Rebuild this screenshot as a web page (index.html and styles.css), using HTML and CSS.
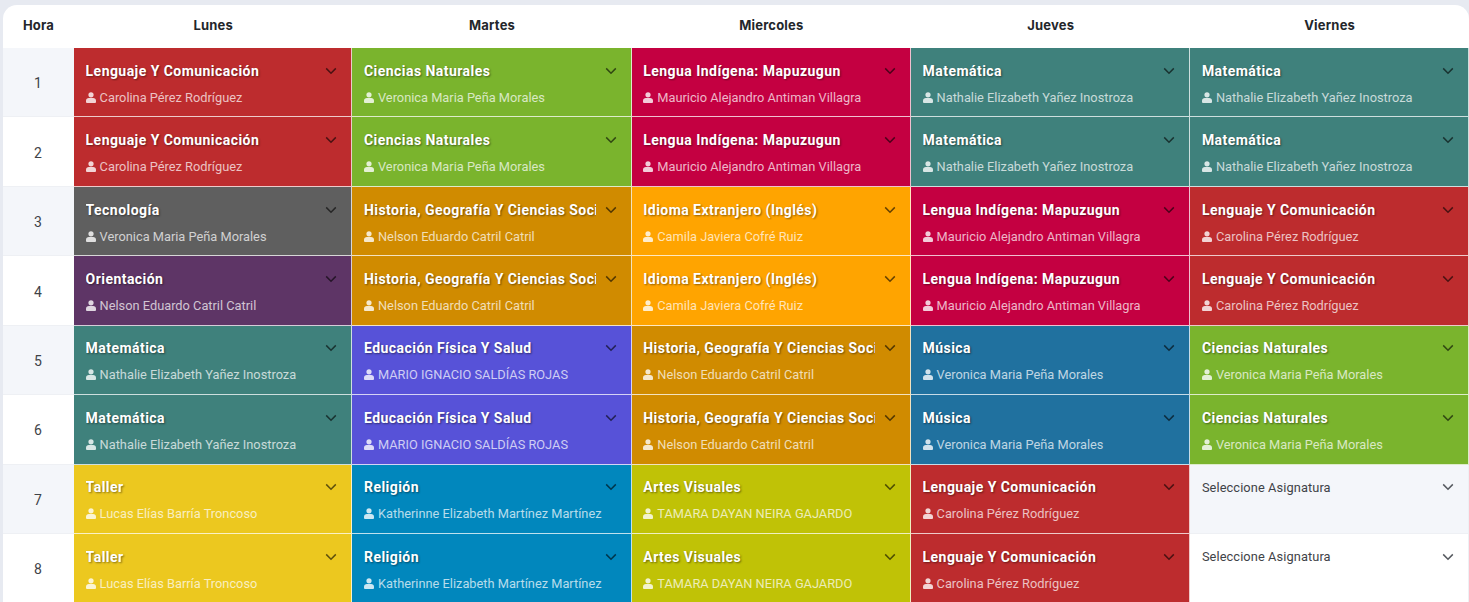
FILE: index.html
```html
<!DOCTYPE html>
<html lang="es">
<head>
<meta charset="utf-8">
<title>Horario</title>
<link rel="stylesheet" href="styles.css">
</head>
<body>
<svg class="defs" width="0" height="0" aria-hidden="true">
<symbol id="chev" viewBox="0 0 12 8"><path d="M1.2 1.4 6 6.2l4.8-4.8" fill="none" stroke="currentColor" stroke-width="1.5"/></symbol>
<symbol id="user" viewBox="0 0 10 11"><circle cx="5" cy="2.8" r="2.6" fill="currentColor"/><path d="M0 10v-1.400C0 6.900 1.300 6 2.800 6h4.400C8.700 6 10 6.900 10 8.600V10a1 1 0 0 1-1 1H1a1 1 0 0 1-1-1z" fill="currentColor"/></symbol>
</svg>
<main class="card">
<div class="grid">
<div class="head">Hora</div><div class="head">Lunes</div><div class="head">Martes</div><div class="head">Miercoles</div><div class="head">Jueves</div><div class="head">Viernes</div>

<div class="hour odd">1</div>
<div class="cell red"><div class="top"><span class="title">Lenguaje Y Comunicación</span><svg class="chev"><use href="#chev"/></svg></div><div class="name"><svg class="user"><use href="#user"/></svg>Carolina Pérez Rodríguez</div></div>
<div class="cell green"><div class="top"><span class="title">Ciencias Naturales</span><svg class="chev"><use href="#chev"/></svg></div><div class="name"><svg class="user"><use href="#user"/></svg>Veronica Maria Peña Morales</div></div>
<div class="cell crimson"><div class="top"><span class="title">Lengua Indígena: Mapuzugun</span><svg class="chev"><use href="#chev"/></svg></div><div class="name"><svg class="user"><use href="#user"/></svg>Mauricio Alejandro Antiman Villagra</div></div>
<div class="cell teal"><div class="top"><span class="title">Matemática</span><svg class="chev"><use href="#chev"/></svg></div><div class="name"><svg class="user"><use href="#user"/></svg>Nathalie Elizabeth Yañez Inostroza</div></div>
<div class="cell teal"><div class="top"><span class="title">Matemática</span><svg class="chev"><use href="#chev"/></svg></div><div class="name"><svg class="user"><use href="#user"/></svg>Nathalie Elizabeth Yañez Inostroza</div></div>

<div class="hour">2</div>
<div class="cell red"><div class="top"><span class="title">Lenguaje Y Comunicación</span><svg class="chev"><use href="#chev"/></svg></div><div class="name"><svg class="user"><use href="#user"/></svg>Carolina Pérez Rodríguez</div></div>
<div class="cell green"><div class="top"><span class="title">Ciencias Naturales</span><svg class="chev"><use href="#chev"/></svg></div><div class="name"><svg class="user"><use href="#user"/></svg>Veronica Maria Peña Morales</div></div>
<div class="cell crimson"><div class="top"><span class="title">Lengua Indígena: Mapuzugun</span><svg class="chev"><use href="#chev"/></svg></div><div class="name"><svg class="user"><use href="#user"/></svg>Mauricio Alejandro Antiman Villagra</div></div>
<div class="cell teal"><div class="top"><span class="title">Matemática</span><svg class="chev"><use href="#chev"/></svg></div><div class="name"><svg class="user"><use href="#user"/></svg>Nathalie Elizabeth Yañez Inostroza</div></div>
<div class="cell teal"><div class="top"><span class="title">Matemática</span><svg class="chev"><use href="#chev"/></svg></div><div class="name"><svg class="user"><use href="#user"/></svg>Nathalie Elizabeth Yañez Inostroza</div></div>

<div class="hour odd">3</div>
<div class="cell grey"><div class="top"><span class="title">Tecnología</span><svg class="chev"><use href="#chev"/></svg></div><div class="name"><svg class="user"><use href="#user"/></svg>Veronica Maria Peña Morales</div></div>
<div class="cell ochre"><div class="top"><span class="title">Historia, Geografía Y Ciencias Sociales</span><svg class="chev"><use href="#chev"/></svg></div><div class="name"><svg class="user"><use href="#user"/></svg>Nelson Eduardo Catril Catril</div></div>
<div class="cell amber"><div class="top"><span class="title">Idioma Extranjero (Inglés)</span><svg class="chev"><use href="#chev"/></svg></div><div class="name"><svg class="user"><use href="#user"/></svg>Camila Javiera Cofré Ruiz</div></div>
<div class="cell crimson"><div class="top"><span class="title">Lengua Indígena: Mapuzugun</span><svg class="chev"><use href="#chev"/></svg></div><div class="name"><svg class="user"><use href="#user"/></svg>Mauricio Alejandro Antiman Villagra</div></div>
<div class="cell red"><div class="top"><span class="title">Lenguaje Y Comunicación</span><svg class="chev"><use href="#chev"/></svg></div><div class="name"><svg class="user"><use href="#user"/></svg>Carolina Pérez Rodríguez</div></div>

<div class="hour">4</div>
<div class="cell purple"><div class="top"><span class="title">Orientación</span><svg class="chev"><use href="#chev"/></svg></div><div class="name"><svg class="user"><use href="#user"/></svg>Nelson Eduardo Catril Catril</div></div>
<div class="cell ochre"><div class="top"><span class="title">Historia, Geografía Y Ciencias Sociales</span><svg class="chev"><use href="#chev"/></svg></div><div class="name"><svg class="user"><use href="#user"/></svg>Nelson Eduardo Catril Catril</div></div>
<div class="cell amber"><div class="top"><span class="title">Idioma Extranjero (Inglés)</span><svg class="chev"><use href="#chev"/></svg></div><div class="name"><svg class="user"><use href="#user"/></svg>Camila Javiera Cofré Ruiz</div></div>
<div class="cell crimson"><div class="top"><span class="title">Lengua Indígena: Mapuzugun</span><svg class="chev"><use href="#chev"/></svg></div><div class="name"><svg class="user"><use href="#user"/></svg>Mauricio Alejandro Antiman Villagra</div></div>
<div class="cell red"><div class="top"><span class="title">Lenguaje Y Comunicación</span><svg class="chev"><use href="#chev"/></svg></div><div class="name"><svg class="user"><use href="#user"/></svg>Carolina Pérez Rodríguez</div></div>

<div class="hour odd">5</div>
<div class="cell teal"><div class="top"><span class="title">Matemática</span><svg class="chev"><use href="#chev"/></svg></div><div class="name"><svg class="user"><use href="#user"/></svg>Nathalie Elizabeth Yañez Inostroza</div></div>
<div class="cell violet"><div class="top"><span class="title">Educación Física Y Salud</span><svg class="chev"><use href="#chev"/></svg></div><div class="name"><svg class="user"><use href="#user"/></svg>MARIO IGNACIO SALDÍAS ROJAS</div></div>
<div class="cell ochre"><div class="top"><span class="title">Historia, Geografía Y Ciencias Sociales</span><svg class="chev"><use href="#chev"/></svg></div><div class="name"><svg class="user"><use href="#user"/></svg>Nelson Eduardo Catril Catril</div></div>
<div class="cell blue"><div class="top"><span class="title">Música</span><svg class="chev"><use href="#chev"/></svg></div><div class="name"><svg class="user"><use href="#user"/></svg>Veronica Maria Peña Morales</div></div>
<div class="cell green"><div class="top"><span class="title">Ciencias Naturales</span><svg class="chev"><use href="#chev"/></svg></div><div class="name"><svg class="user"><use href="#user"/></svg>Veronica Maria Peña Morales</div></div>

<div class="hour">6</div>
<div class="cell teal"><div class="top"><span class="title">Matemática</span><svg class="chev"><use href="#chev"/></svg></div><div class="name"><svg class="user"><use href="#user"/></svg>Nathalie Elizabeth Yañez Inostroza</div></div>
<div class="cell violet"><div class="top"><span class="title">Educación Física Y Salud</span><svg class="chev"><use href="#chev"/></svg></div><div class="name"><svg class="user"><use href="#user"/></svg>MARIO IGNACIO SALDÍAS ROJAS</div></div>
<div class="cell ochre"><div class="top"><span class="title">Historia, Geografía Y Ciencias Sociales</span><svg class="chev"><use href="#chev"/></svg></div><div class="name"><svg class="user"><use href="#user"/></svg>Nelson Eduardo Catril Catril</div></div>
<div class="cell blue"><div class="top"><span class="title">Música</span><svg class="chev"><use href="#chev"/></svg></div><div class="name"><svg class="user"><use href="#user"/></svg>Veronica Maria Peña Morales</div></div>
<div class="cell green"><div class="top"><span class="title">Ciencias Naturales</span><svg class="chev"><use href="#chev"/></svg></div><div class="name"><svg class="user"><use href="#user"/></svg>Veronica Maria Peña Morales</div></div>

<div class="hour odd">7</div>
<div class="cell yellow"><div class="top"><span class="title">Taller</span><svg class="chev"><use href="#chev"/></svg></div><div class="name"><svg class="user"><use href="#user"/></svg>Lucas Elías Barría Troncoso</div></div>
<div class="cell cyan"><div class="top"><span class="title">Religión</span><svg class="chev"><use href="#chev"/></svg></div><div class="name"><svg class="user"><use href="#user"/></svg>Katherinne Elizabeth Martínez Martínez</div></div>
<div class="cell olive"><div class="top"><span class="title">Artes Visuales</span><svg class="chev"><use href="#chev"/></svg></div><div class="name"><svg class="user"><use href="#user"/></svg>TAMARA DAYAN NEIRA GAJARDO</div></div>
<div class="cell red"><div class="top"><span class="title">Lenguaje Y Comunicación</span><svg class="chev"><use href="#chev"/></svg></div><div class="name"><svg class="user"><use href="#user"/></svg>Carolina Pérez Rodríguez</div></div>
<div class="cell empty odd"><div class="top"><span class="placeholder">Seleccione Asignatura</span><svg class="chev"><use href="#chev"/></svg></div></div>

<div class="hour">8</div>
<div class="cell yellow"><div class="top"><span class="title">Taller</span><svg class="chev"><use href="#chev"/></svg></div><div class="name"><svg class="user"><use href="#user"/></svg>Lucas Elías Barría Troncoso</div></div>
<div class="cell cyan"><div class="top"><span class="title">Religión</span><svg class="chev"><use href="#chev"/></svg></div><div class="name"><svg class="user"><use href="#user"/></svg>Katherinne Elizabeth Martínez Martínez</div></div>
<div class="cell olive"><div class="top"><span class="title">Artes Visuales</span><svg class="chev"><use href="#chev"/></svg></div><div class="name"><svg class="user"><use href="#user"/></svg>TAMARA DAYAN NEIRA GAJARDO</div></div>
<div class="cell red"><div class="top"><span class="title">Lenguaje Y Comunicación</span><svg class="chev"><use href="#chev"/></svg></div><div class="name"><svg class="user"><use href="#user"/></svg>Carolina Pérez Rodríguez</div></div>
<div class="cell empty"><div class="top"><span class="placeholder">Seleccione Asignatura</span><svg class="chev"><use href="#chev"/></svg></div></div>
</div>
</main>
</body>
</html>
```
FILE: styles.css
```css
html, body {
  margin: 0;
  height: 602px;
  overflow: hidden;
  background: #e7eaf1;
}
body {
  padding: 5px 0 0 3px;
  box-sizing: border-box;
  font-family: Roboto, "Liberation Sans", sans-serif;
}
.defs { display: block; }
.card {
  background: #fff;
  border-radius: 14px 14px 0 0;
  overflow: hidden;
}
.grid {
  display: grid;
  grid-template-columns: 71px 278.4px 279.3px 279.3px 279.3px 278.7px;
  grid-template-rows: 43px repeat(8, 69.45px);
}
.head {
  display: flex;
  align-items: center;
  justify-content: center;
  padding-bottom: 3px;
  box-sizing: border-box;
  font-family: Inter, "Liberation Sans", sans-serif;
  font-size: 13px;
  font-weight: 700;
  letter-spacing: .2px;
  color: #23262b;
}
.hour {
  display: flex;
  align-items: center;
  justify-content: center;
  padding: 2px 1px 0 0;
  font-size: 14px;
  color: #3f4348;
  border-bottom: 1px solid #eef0f4;
  box-sizing: border-box;
}
.odd { background: #f4f6fa; }
.cell {
  min-width: 0;
  box-sizing: border-box;
  padding: 12.7px 12px 0 11.6px;
  border-right: 1px solid rgba(255, 255, 255, .75);
  border-bottom: 1px solid rgba(255, 255, 255, .75);
  color: #fff;
}
.top {
  display: flex;
  align-items: center;
  justify-content: space-between;
  height: 20px;
}
.title {
  flex: 0 1 232px;
  width: 232px;
  overflow: hidden;
  white-space: nowrap;
  font-size: 14px;
  font-weight: 700;
  letter-spacing: .45px;
  line-height: 20px;
  text-shadow: 1px 1px 2px rgba(0, 0, 0, .45);
}
.chev {
  flex: none;
  width: 12px;
  height: 8px;
  margin-right: 2px;
  color: rgba(0, 0, 0, .6);
}
.name {
  display: flex;
  align-items: center;
  gap: 4px;
  margin-top: 6.5px;
  height: 20px;
  font-size: 12.8px;
  white-space: nowrap;
  color: rgba(255, 255, 255, .72);
}
.user {
  flex: none;
  width: 10px;
  height: 11px;
  color: rgba(255, 255, 255, .8);
}
.empty { border-bottom-color: #eef0f4; border-right-color: #eef0f4; }
.empty .chev { color: #55595f; }
.placeholder {
  font-size: 12.8px;
  letter-spacing: .1px;
  color: #3f4348;
}
.red { background: #bd2c2e; }
.green { background: #7ab42d; }
.crimson { background: #c40041; }
.teal { background: #3f817c; }
.grey { background: #5f5f5f; }
.ochre { background: #d08b00; }
.amber { background: #ffa400; }
.purple { background: #5e3566; }
.violet { background: #5752d8; }
.blue { background: #20719f; }
.yellow { background: #ecc81f; }
.cyan { background: #0187bd; }
.olive { background: #c0c206; }
```
